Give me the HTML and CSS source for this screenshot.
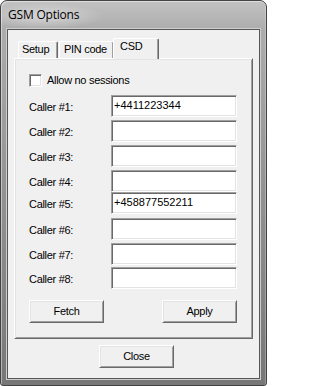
FILE: index.html
```html
<!DOCTYPE html>
<html>
<head>
<meta charset="utf-8">
<link rel="stylesheet" href="styles.css">
</head>
<body>
<div class="window">
  <div class="titlebar"><span class="title">GSM Options</span></div>
  <div class="client">
    <div class="tabstrip">
      <div class="tab tab-setup">Setup</div>
      <div class="tab tab-pin">PIN code</div>
      <div class="tab tab-csd active">CSD</div>
    </div>
    <div class="panel">
      <label class="check-row"><span class="checkbox"></span><span class="text">Allow no sessions</span></label>
      <div class="callers">
        <div class="row"><span class="label">Caller #1:</span><div class="field">+4411223344</div></div>
        <div class="row"><span class="label">Caller #2:</span><div class="field"></div></div>
        <div class="row"><span class="label">Caller #3:</span><div class="field"></div></div>
        <div class="row"><span class="label">Caller #4:</span><div class="field"></div></div>
        <div class="row row-tight"><span class="label">Caller #5:</span><div class="field">+458877552211</div></div>
        <div class="row row-loose"><span class="label">Caller #6:</span><div class="field"></div></div>
        <div class="row"><span class="label">Caller #7:</span><div class="field"></div></div>
        <div class="row row-snug"><span class="label">Caller #8:</span><div class="field"></div></div>
      </div>
      <div class="actions">
        <button class="btn">Fetch</button>
        <button class="btn">Apply</button>
      </div>
    </div>
    <div class="footer"><button class="btn">Close</button></div>
  </div>
</div>
</body>
</html>
```
FILE: styles.css
```css
* { box-sizing: border-box; }
html, body { margin: 0; padding: 0; background: #ffffff; }
body {
  font-family: "Liberation Sans", Arial, sans-serif;
  font-size: 11px;
  color: #000;
}
.window {
  width: 267px;
  height: 386px;
  border: 1px solid #434343;
  border-radius: 7px 7px 3px 3px;
  background:
    radial-gradient(ellipse 58px 13px at 44px 15px, rgba(255,255,255,0.45), rgba(255,255,255,0) 100%),
    linear-gradient(to bottom, #c2c2c2 0, #adadad 28px, #959595 45%, #777777 100%);
  box-shadow: inset 1px 1px rgba(255,255,255,0.45), inset -1px 0 rgba(255,255,255,0.25);
  padding: 0 6px 6px;
  display: flex;
  flex-direction: column;
}
.titlebar {
  height: 28px;
  flex: none;
  padding: 6px 0 0 1px;
  font-family: "Open Sans", "Noto Sans", sans-serif;
  font-size: 12px;
  line-height: 16px;
  letter-spacing: -0.2px;
}
.client {
  height: 350px;
  flex: none;
  border: 1px solid #575757;
  box-shadow: 0 0 0 1px #cdcdcd;
  background: #f0f0f0;
  padding: 8px 0 0 6px;
}
.tabstrip {
  display: flex;
  align-items: flex-end;
  height: 20px;
  padding-left: 4px;
  position: relative;
  z-index: 1;
}
.tab {
  height: 17px;
  padding: 1px 0 0 4px;
  margin-right: 1px;
  border-left: 1px solid #ffffff;
  border-top: 1px solid #ffffff;
  border-right: 1px solid #696969;
  box-shadow: inset -1px 0 #a0a0a0;
  border-radius: 2px 2px 0 0;
  background: #f0f0f0;
  line-height: 13px;
  white-space: nowrap;
  letter-spacing: -0.3px;
}
.tab-setup { width: 40px; padding-left: 3px; }
.tab-pin { width: 55px; }
.tab.active {
  width: 46px;
  height: 21px;
  margin: 0 0 -1px -2px;
  padding-left: 6px;
}
.panel {
  width: 239px;
  height: 281px;
  border: 1px solid;
  border-color: #ffffff #696969 #696969 #ffffff;
  box-shadow: inset 1px 1px #e3e3e3, inset -1px -1px #a0a0a0;
  padding: 15px 0 0 14px;
}
.check-row {
  display: flex;
  align-items: center;
  gap: 5px;
  height: 13px;
  letter-spacing: -0.3px;
  line-height: 13px;
}
.checkbox, .field {
  background: #ffffff;
  border: 1px solid;
  border-color: #a0a0a0 #ffffff #ffffff #a0a0a0;
  box-shadow: inset 1px 1px #696969, inset -1px -1px #e3e3e3;
}
.checkbox {
  width: 13px;
  height: 13px;
  flex: none;
}
.callers {
  display: flex;
  flex-direction: column;
  gap: 3px;
  margin-top: 8px;
  width: 208px;
}
.row {
  display: flex;
  align-items: center;
  height: 22px;
}
.row-tight { margin-top: -3px; }
.row-loose { margin-top: 1px; }
.row-snug { margin-top: -1px; }
.label {
  width: 82px;
  flex: none;
  padding-top: 2px;
  line-height: 13px;
  letter-spacing: -0.3px;
}
.field {
  width: 126px;
  height: 22px;
  flex: none;
  padding: 3px 2px 0;
  line-height: 13px;
  white-space: nowrap;
}
.actions {
  display: flex;
  justify-content: space-between;
  width: 208px;
  margin-top: 11px;
}
.btn {
  width: 75px;
  height: 23px;
  padding: 0 0 1px;
  font: inherit;
  line-height: 13px;
  letter-spacing: -0.3px;
  color: #000;
  background: #f0f0f0;
  border: 1px solid;
  border-color: #ffffff #696969 #696969 #ffffff;
  box-shadow: inset 1px 1px #e3e3e3, inset -1px -1px #a0a0a0;
}
.footer {
  margin-top: 6px;
  padding-left: 85px;
}
```
